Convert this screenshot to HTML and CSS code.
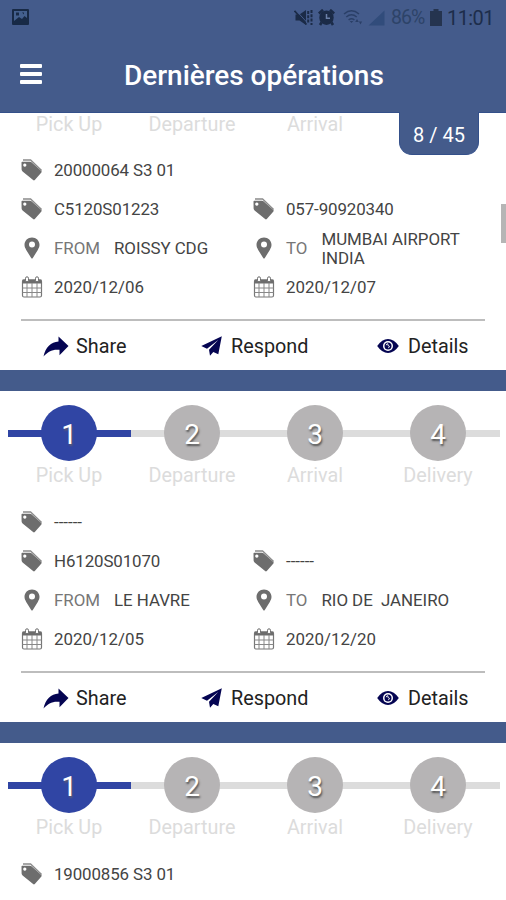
FILE: index.html
```html
<!DOCTYPE html>
<html lang="fr">
<head>
<meta charset="utf-8">
<title>Dernières opérations</title>
<link rel="stylesheet" href="styles.css">
</head>
<body>
<svg class="defs" width="0" height="0">
  <symbol id="tag" viewBox="0 0 22 22"><path d="M2 1h7.600L20.600 11.500" fill="none" stroke="#8b8b8b" stroke-width="1.300"/><path fill="#6d6d6d" fill-rule="evenodd" d="M.5 3.500Q.5 2.700 1.200 2.700H9q.8 0 1.500.6l9.800 8.700q.8.8.1 1.600l-6.600 7.400q-.8.800-1.700.1L1.600 12.500Q.7 11.700.6 10.500ZM3.800 4.500a1.600 1.600 0 1 0 .01 0Z"/></symbol>
  <symbol id="pin" viewBox="0 0 16 22"><path fill="#6d6d6d" fill-rule="evenodd" d="M8 .5C3.800.5.500 3.700.5 7.800c0 2 .8 3.400 1.700 5.100L7.200 21q.8 1.200 1.600 0l5-8.100c.9-1.700 1.700-3.100 1.700-5.100C15.500 3.700 12.200.5 8 .5ZM8 4.500a3 3 0 1 1 0 6 3 3 0 0 1 0-6Z"/></symbol>
  <symbol id="cal" viewBox="0 0 21 22"><rect x="1" y="4" width="19" height="17" rx="1.500" fill="#fff" stroke="#777" stroke-width="1.200"/><path fill="#6d6d6d" d="M1 3.500h19v4H1z"/><path d="M5.500 7v14M10.500 7v14M15.500 7v14M1 12h19M1 16.500h19" stroke="#888" stroke-width="1"/><rect x="4" y=".8" width="3" height="5" rx="1.500" fill="#fff" stroke="#6d6d6d"/><rect x="14" y=".8" width="3" height="5" rx="1.500" fill="#fff" stroke="#6d6d6d"/></symbol>
  <symbol id="share" viewBox="0 0 26 21"><path fill="#050552" d="M15.500.5 25.500 10l-9 9.200v-5.400C9.500 13 5 15.500.5 20.500 2.500 11.500 8 6 15.500 5.600Z"/></symbol>
  <symbol id="send" viewBox="0 0 21 20"><path fill="#050552" d="M20.800.2 17.300 18.300 12.300 16 9 19.800 8 13.700 17.200 4 6 12.700.3 10Z"/></symbol>
  <symbol id="eye" viewBox="0 0 22 16"><path fill="#050552" d="M.2 8Q5 1 11 1t10.800 7Q17 15 11 15T.2 8Z"/><circle cx="11" cy="8" r="5" fill="#fff"/><circle cx="11" cy="8" r="3.500" fill="#050552"/><path d="M9.300 7.200q0-1.500 1.500-1.500l.2 1.800 1.500.8q0 1.200-1.300 1.500" stroke="#fff" stroke-width=".9" fill="none"/></symbol>
</svg>

<header class="header">
  <div class="status">
    <svg class="s-photo" width="17" height="16" viewBox="0 0 17 16"><rect width="17" height="16" rx="1" fill="#182a46"/><path d="M2 2h13v7l-2.500-2-2.500 3-3-2-5 4z" fill="#44608e"/><path d="M4 3.500h3v3H4zM10 3.500l2 2v-2z" fill="#182a46"/></svg>
    <div class="s-right">
      <svg width="19" height="17" viewBox="0 0 19 17"><path fill="#1b2b47" d="M1.500 5.500h4L12 1v15l-6.500-4.500h-4z"/><path d="M1.800 1.200 13.500 14" stroke="#445b8b" stroke-width="1"/><path d="M.5 1.800 12.500 15.500" stroke="#1b2b47" stroke-width="1.700"/><path d="M14.200 2v13M17.500 1v15" stroke="#1b2b47" stroke-width="2" stroke-dasharray="3 1.300"/></svg>
      <svg class="s-alarm" width="17" height="17" viewBox="0 0 17 17"><circle cx="8.500" cy="8.700" r="7.200" fill="#1b2b47"/><path d="M.8 4.500 5 .8M16.200 4.500 12 .8M3.500 13.500 2 16M13.500 13.500l1.500 2.500" stroke="#1b2b47" stroke-width="2.600"/><path d="M8.500 5v4.200h3.500" stroke="#6b80a8" stroke-width="1.500" fill="none"/></svg>
      <svg class="s-wifi" width="20" height="17" viewBox="0 0 20 17"><path d="M1 5q7.500-6.500 15 0M3.300 8q5.200-4.500 10.400 0M5.600 11q2.900-2.500 5.800 0" stroke="#2a3f67" stroke-width="1.500" fill="none"/><path d="m8.500 14-1.800-2h3.600zM14 10l1.800 3h-3.600zM17.500 15.500l-1.600-3h3.200z" fill="#2a3f67"/></svg>
      <svg class="s-signal" width="17" height="16" viewBox="0 0 17 16"><path d="M16.500.5v15H.5z" fill="#314c7b"/></svg>
      <span class="s-pct">86%</span>
      <svg class="s-bat" width="12" height="17" viewBox="0 0 12 17"><path d="M3.500 0h5v2H12v15H0V2h3.500z" fill="#25344f"/></svg>
      <span class="s-time">11:01</span>
    </div>
  </div>
  <div class="bar">
    <div class="menu"><i></i><i></i><i></i></div>
    <h1 class="title">Dernières opérations</h1>
  </div>
  <div class="counter">8 / 45</div>
</header>

<main class="list">
  <article class="card partial">
    <div class="steps">
      <div class="step"><span>Pick Up</span></div>
      <div class="step"><span>Departure</span></div>
      <div class="step"><span>Arrival</span></div>
    </div>
    <div class="info">
      <div class="cell wide"><svg><use href="#tag"/></svg><span class="code">20000064 S3 01</span></div>
      <div class="cell"><svg><use href="#tag"/></svg><span class="code">C5120S01223</span></div>
      <div class="cell"><svg><use href="#tag"/></svg><span class="code">057-90920340</span></div>
      <div class="cell"><svg><use href="#pin"/></svg><em class="from">FROM</em><span class="place">ROISSY CDG</span></div>
      <div class="cell"><svg><use href="#pin"/></svg><em class="to">TO</em><span class="place">MUMBAI AIRPORT<br>INDIA</span></div>
      <div class="cell"><svg><use href="#cal"/></svg><span>2020/12/06</span></div>
      <div class="cell"><svg><use href="#cal"/></svg><span>2020/12/07</span></div>
    </div>
    <div class="actions">
      <a class="share"><svg><use href="#share"/></svg>Share</a>
      <a class="respond"><svg><use href="#send"/></svg>Respond</a>
      <a class="details"><svg><use href="#eye"/></svg>Details</a>
    </div>
  </article>

  <article class="card">
    <div class="steps">
      <div class="step on"><b>1</b><span>Pick Up</span></div>
      <div class="step"><b>2</b><span>Departure</span></div>
      <div class="step"><b>3</b><span>Arrival</span></div>
      <div class="step"><b>4</b><span>Delivery</span></div>
    </div>
    <div class="info">
      <div class="cell wide"><svg><use href="#tag"/></svg><span class="dash">------</span></div>
      <div class="cell"><svg><use href="#tag"/></svg><span class="code">H6120S01070</span></div>
      <div class="cell"><svg><use href="#tag"/></svg><span class="dash">------</span></div>
      <div class="cell"><svg><use href="#pin"/></svg><em class="from">FROM</em><span class="place">LE HAVRE</span></div>
      <div class="cell"><svg><use href="#pin"/></svg><em class="to">TO</em><span class="place">RIO DE&nbsp; JANEIRO</span></div>
      <div class="cell"><svg><use href="#cal"/></svg><span>2020/12/05</span></div>
      <div class="cell"><svg><use href="#cal"/></svg><span>2020/12/20</span></div>
    </div>
    <div class="actions">
      <a class="share"><svg><use href="#share"/></svg>Share</a>
      <a class="respond"><svg><use href="#send"/></svg>Respond</a>
      <a class="details"><svg><use href="#eye"/></svg>Details</a>
    </div>
  </article>

  <article class="card">
    <div class="steps">
      <div class="step on"><b>1</b><span>Pick Up</span></div>
      <div class="step"><b>2</b><span>Departure</span></div>
      <div class="step"><b>3</b><span>Arrival</span></div>
      <div class="step"><b>4</b><span>Delivery</span></div>
    </div>
    <div class="info">
      <div class="cell wide"><svg><use href="#tag"/></svg><span class="code">19000856 S3 01</span></div>
    </div>
  </article>
  <div class="thumb"></div>
</main>
</body>
</html>
```
FILE: styles.css
```css
* { box-sizing: border-box; }
body {
  margin: 0;
  width: 506px;
  height: 900px;
  overflow: hidden;
  display: flex;
  flex-direction: column;
  background: #fff;
  font-family: Roboto, "Liberation Sans", sans-serif;
}
.defs { position: absolute; }

.header {
  position: relative;
  z-index: 2;
  flex: none;
  height: 113px;
  background: #445b8b;
  border-bottom: 1px solid #34508a;
}
.status {
  display: flex;
  justify-content: space-between;
  align-items: center;
  height: 35px;
  padding: 0 13px 0 12px;
}
.s-photo { margin-top: -2px; }
.s-right { display: flex; align-items: center; color: #23395f; }
.s-alarm { margin-left: 5px; }
.s-wifi { margin-left: 8px; }
.s-signal { margin-left: 5px; }
.s-pct { margin-left: 6px; width: 33px; font-size: 19.5px; letter-spacing: -.9px; color: #2d4368; }
.s-bat { margin-left: 6px; }
.s-time { margin-left: 5px; font-size: 20px; letter-spacing: -.6px; width: 46px; white-space: nowrap; color: #1d2d4a; }

.bar {
  display: grid;
  grid-template-columns: 104px 1fr;
  height: 77px;
  padding-left: 20px;
}
.menu { display: flex; flex-direction: column; gap: 4px; padding-top: 29px; }
.menu i { width: 22px; height: 4px; border-radius: 1px; background: #fff; }
.title {
  margin: 0;
  padding-top: 25px;
  font-size: 28px;
  line-height: 32px;
  font-weight: 500;
  letter-spacing: -.03px;
  color: #fff;
  white-space: nowrap;
}
.counter {
  position: absolute;
  left: 399px;
  top: 112px;
  width: 80px;
  height: 43px;
  border-radius: 0 0 13px 13px;
  border: solid #34508a;
  border-width: 0 1px 1px;
  background: #445b8b;
  color: #fff;
  font-size: 20px;
  line-height: 46px;
  text-align: center;
}

.list { position: relative; flex: 1; overflow: hidden; }
.card {
  height: 351.5px;
  border-bottom: 21px solid #445b8b;
  background: #fff;
}
.card.partial { height: 278px; }

.steps {
  display: grid;
  grid-template-columns: repeat(4, 1fr);
  height: 112px;
  padding: 14px 6.500px 0 7.500px;
}
.step {
  display: flex;
  flex-direction: column;
  align-items: center;
  background: linear-gradient(#dcdcdc, #dcdcdc) 0 25px / 100% 7px no-repeat;
}
.step.on { background-image: linear-gradient(#3045a4, #3045a4); }
.step b {
  flex: none;
  width: 56px;
  height: 56px;
  border-radius: 50%;
  background: #b6b4b5;
  color: #fff;
  font-size: 28px;
  font-weight: 400;
  line-height: 60px;
  text-align: center;
  text-shadow: 1px 2px 2px #555;
}
.step.on b { background: #3045a4; text-shadow: 1px 2px 2px #5d5d70; }
.step span { font-size: 19.8px; line-height: 29px; color: #dcdcdc; }
.partial .steps { height: 38px; padding-top: 0; }
.partial .step { background: none; }
.partial .step span { line-height: 23px; }

.info {
  display: grid;
  grid-template-columns: 232px 1fr;
  grid-auto-rows: 39px;
  height: 168px;
  padding-left: 21px;
}
.cell { display: flex; align-items: center; font-size: 16.9px; line-height: 19px; color: #444; white-space: nowrap; }
.cell.wide { grid-column: 1 / 3; }
.cell svg { flex: none; width: 22px; height: 22px; margin: -1px 11px 0 0; }
.cell em { font-style: normal; color: #777; }
.cell .from { width: 60px; }
.cell .to { width: 35.500px; }
.code { letter-spacing: -.12px; }
.place { letter-spacing: -.05px; }

.actions {
  display: grid;
  grid-template-columns: 158px 176px 1fr;
  margin: 0 21px;
  padding-left: 22px;
  height: 50px;
  border-top: 2px solid #bdbdbd;
}
.actions a { display: flex; align-items: center; padding-top: 2px; font-size: 19.8px; color: #222; }
.share svg { width: 26px; height: 21px; margin-right: 7px; }
.respond svg { width: 21px; height: 20px; margin-right: 9px; }
.details svg { width: 22px; height: 16px; margin-right: 9px; }

.thumb { position: absolute; right: 0; top: 91px; width: 5px; height: 39px; background: #b5b5b5; }
```
